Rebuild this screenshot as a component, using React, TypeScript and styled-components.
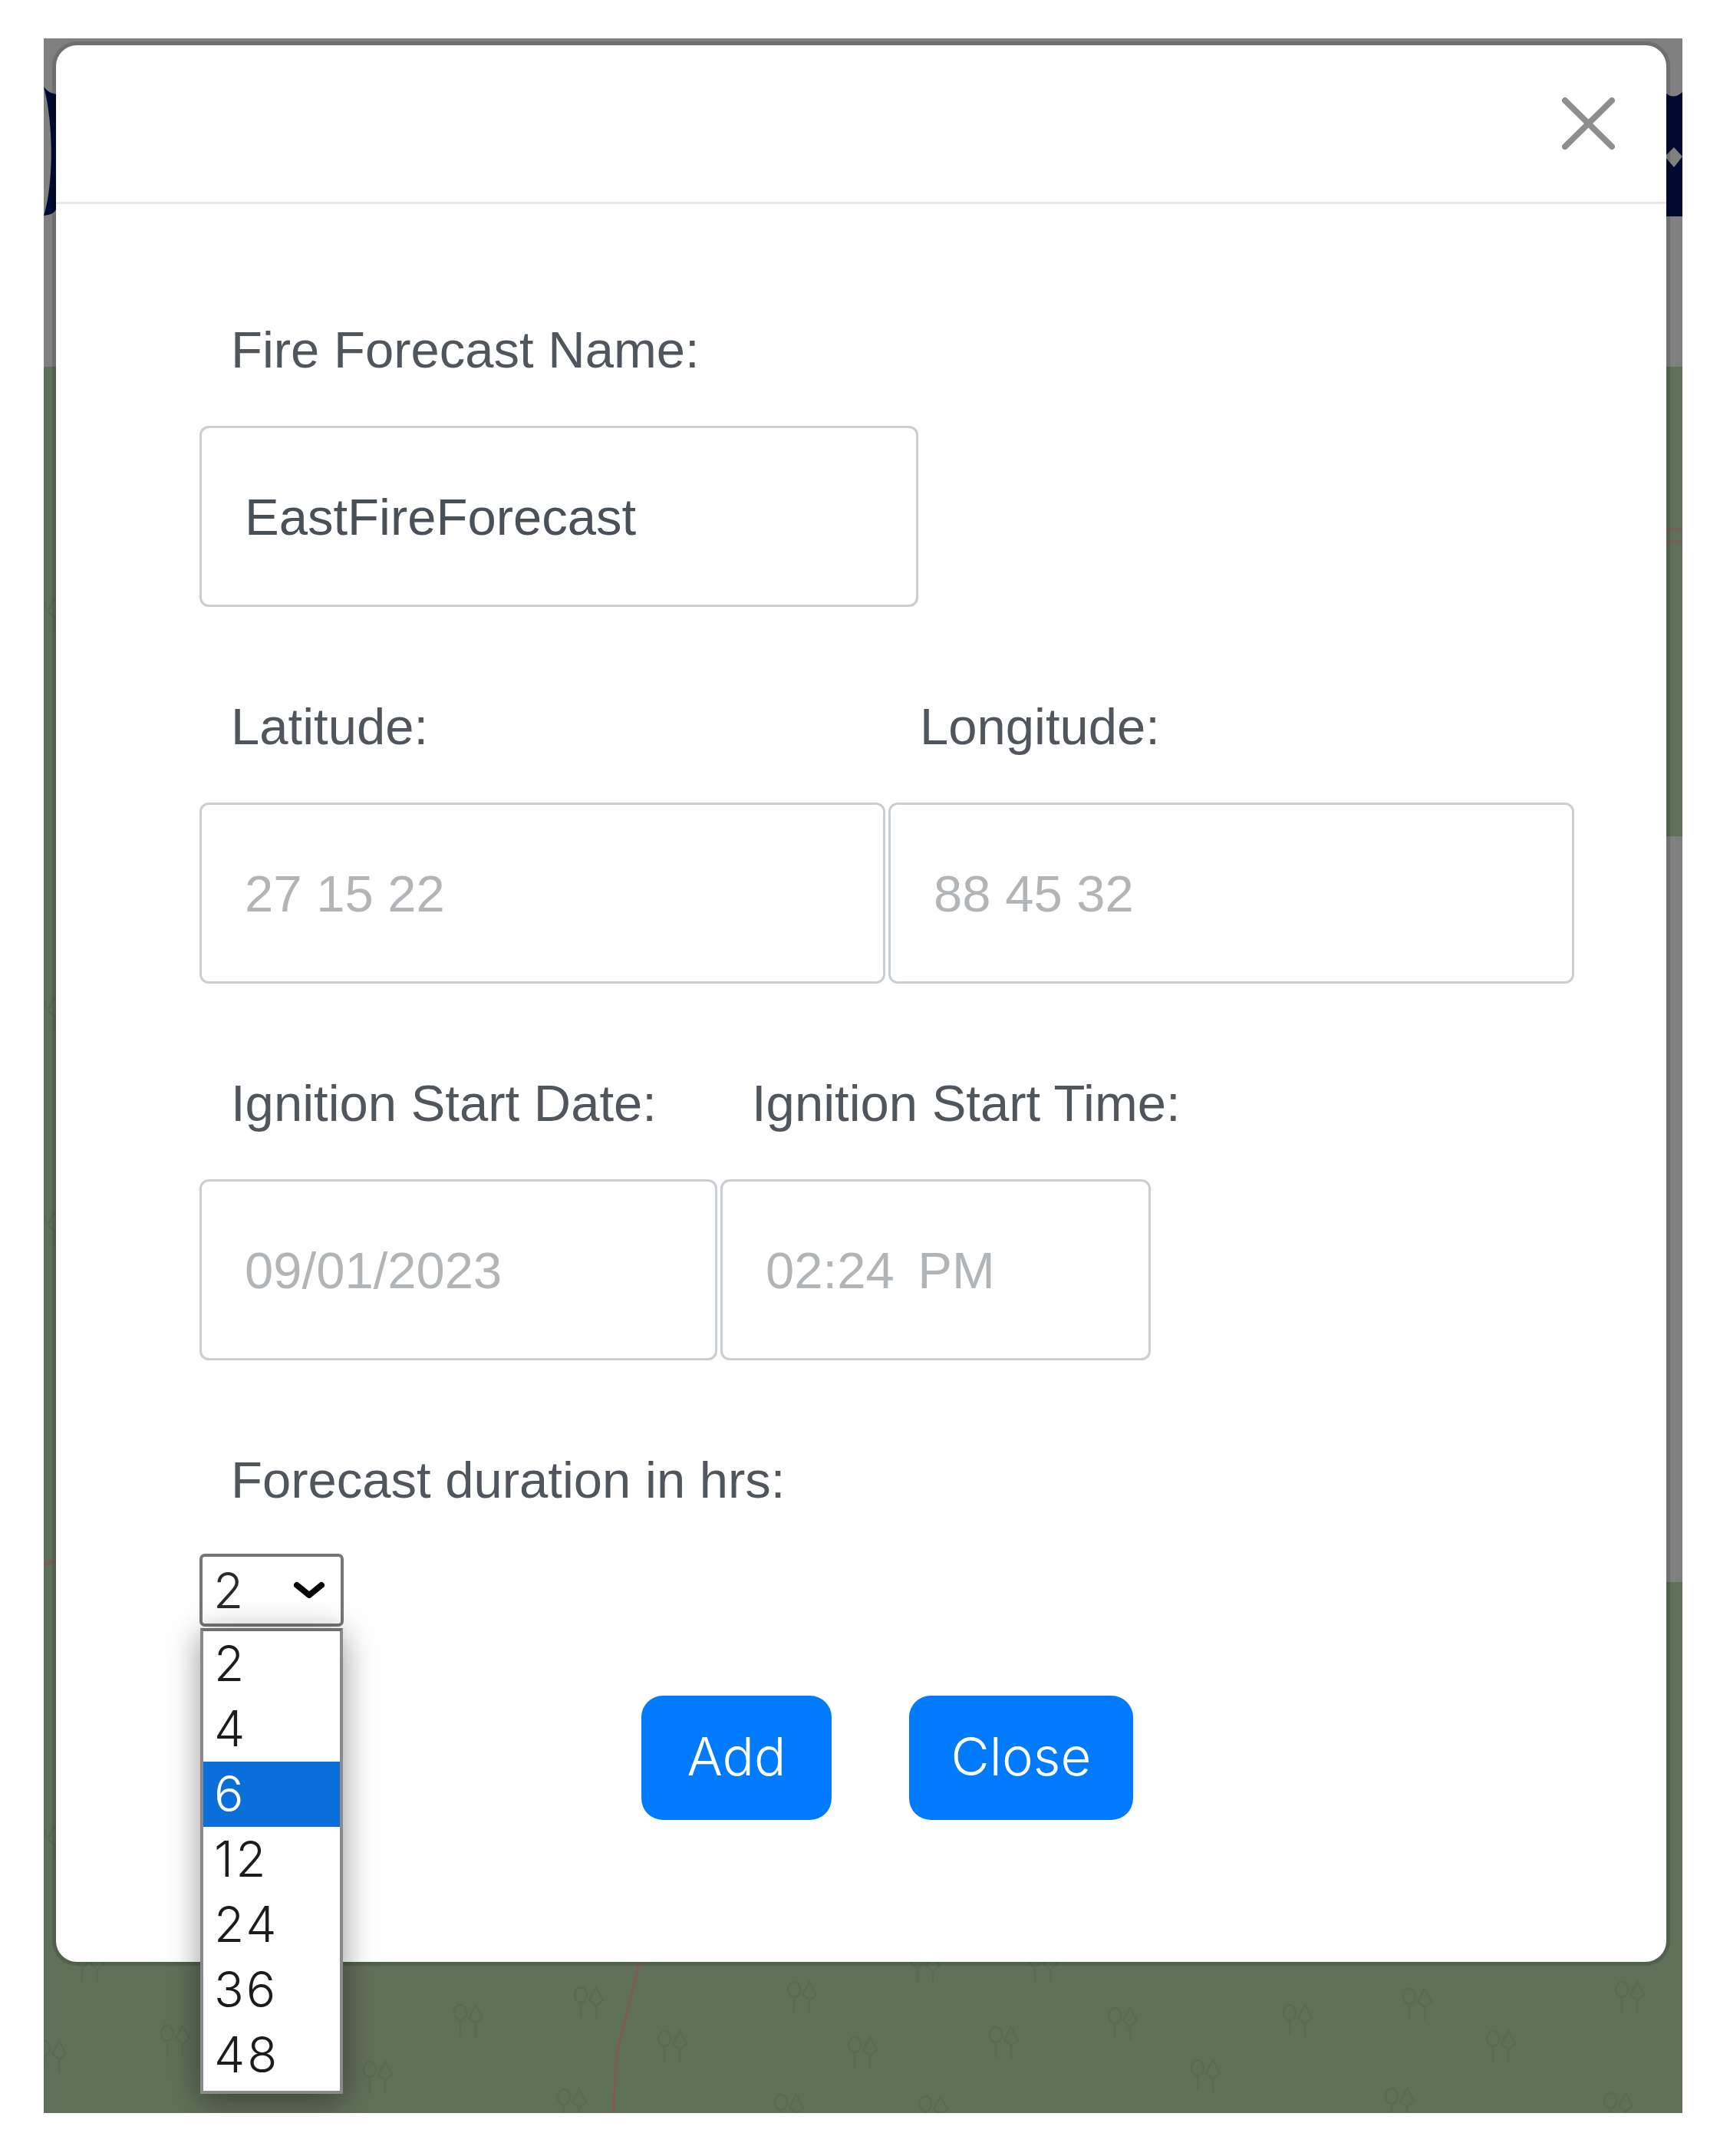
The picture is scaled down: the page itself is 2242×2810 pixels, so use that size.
import React from "react";
import styled, { createGlobalStyle } from "styled-components";

const Global = createGlobalStyle`
  html, body { margin: 0; padding: 0; background: #fff; }
  * { box-sizing: border-box; }
`;

const Page = styled.div`
  width: 2242px;
  height: 2810px;
  padding: 50px 49px 56px 57px;
  font-family: "Liberation Sans", Arial, sans-serif;
`;

const Backdrop = styled.div`
  position: relative;
  width: 2136px;
  height: 2704px;
  padding: 4px 16px 0 11px;
  overflow: hidden;
`;

const MapArt = styled.svg`
  position: absolute;
  inset: 0;
  width: 100%;
  height: 100%;
`;

const Modal = styled.div`
  position: relative;
  display: flex;
  flex-direction: column;
  width: 2109px;
  height: 2508px;
  background: #fff;
  background-clip: padding-box;
  border: 5px solid rgba(0, 0, 0, 0.13);
  border-radius: 32px;
`;

const Header = styled.div`
  display: flex;
  justify-content: flex-end;
  align-items: flex-start;
  flex: none;
  height: 207px;
  padding: 68px 67px 0 0;
  border-bottom: 3px solid #e6eaee;
`;

const CloseIcon = styled.button`
  display: block;
  width: 69px;
  height: 68px;
  padding: 0;
  border: 0;
  background: none;
  color: #8e8e8e;
`;

const Body = styled.div`
  display: flex;
  flex-direction: column;
  padding: 137px 0 0 187px;
`;

const Row = styled.div`
  display: flex;
  margin-bottom: 103px;
`;

const Field = styled.div`
  display: flex;
  flex-direction: column;
  margin-right: 4px;
`;

const Label = styled.label`
  display: block;
  height: 105px;
  margin-bottom: 47px;
  padding-left: 41px;
  font-size: 67px;
  line-height: 105px;
  color: #50565c;
  white-space: nowrap;
`;

const Input = styled.input<{ $w: number }>`
  display: block;
  width: ${(p) => p.$w}px;
  height: 236px;
  padding: 0 0 0 56px;
  border: 3px solid #c9ced3;
  border-radius: 12px;
  background: #fff;
  font-family: "Liberation Sans", Arial, sans-serif;
  font-size: 67px;
  color: #495057;
  outline: none;
  &::placeholder {
    color: #b2b5b8;
    opacity: 1;
  }
`;

const TimeInput = styled(Input)`
  &::placeholder {
    word-spacing: 12px;
  }
`;

const SelectLabel = styled(Label)`
  margin-bottom: 44px;
`;

const SelectWrap = styled.div`
  position: relative;
  width: 188px;
`;

const SelectBox = styled.div`
  display: flex;
  align-items: center;
  justify-content: space-between;
  width: 188px;
  height: 95px;
  padding: 0 21px 0 14px;
  border: 4px solid #767676;
  border-radius: 7px;
  background: #fff;
  font-family: Inter, "Liberation Sans", sans-serif;
  font-size: 64px;
  font-weight: 300;
  color: #2b2b2b;
`;

const Chevron = styled.svg`
  display: block;
  width: 40px;
  height: 24px;
`;

const OptionList = styled.ul`
  position: absolute;
  z-index: 5;
  top: 97px;
  left: 1px;
  width: 186px;
  margin: 0;
  padding: 0 0 4px;
  list-style: none;
  background: #fff;
  border: 4px solid #8a8a8a;
  border-top-color: #6f6f6f;
  box-shadow: 0 8px 40px rgba(0, 0, 0, 0.42);
`;

const Option = styled.li<{ $active?: boolean }>`
  height: 85px;
  padding-left: 14px;
  font-family: Inter, "Liberation Sans", sans-serif;
  font-size: 64px;
  font-weight: 300;
  letter-spacing: 3px;
  line-height: 83px;
  color: ${(p) => (p.$active ? "#fff" : "#1c1c1c")};
  background: ${(p) => (p.$active ? "#0a6fd8" : "transparent")};
`;

const Actions = styled.div`
  display: flex;
  gap: 101px;
  margin: 90px 0 0 576px;
`;

const Action = styled.button<{ $w: number }>`
  width: ${(p) => p.$w}px;
  height: 162px;
  padding: 0 0 5px;
  border: 0;
  border-radius: 28px;
  background: #007bff;
  color: #fff;
  font-family: Inter, "Liberation Sans", sans-serif;
  font-size: 69px;
  font-weight: 300;
`;

const trees: [number, number][] = [
  [118, 2563], [68, 2680], [229, 2660], [493, 2707], [611, 2633], [768, 2610],
  [877, 2667], [746, 2743], [1046, 2603], [1029, 2750], [1125, 2675],
  [1207, 2565], [1360, 2563], [1309, 2662], [1464, 2637], [1692, 2633], [1848, 2612],
  [1572, 2705], [1825, 2742], [1957, 2667], [2125, 2603], [2110, 2748], [1217, 2752],
  [62, 800], [62, 1320], [62, 1600], [62, 2400],
];

const options = ["2", "4", "6", "12", "24", "36", "48"];

function Map() {
  return (
    <MapArt viewBox="57 50 2136 2704" preserveAspectRatio="none">
      <rect x="57" y="50" width="2136" height="428" fill="#808080" />
      <rect x="57" y="478" width="2136" height="2276" fill="#5f7059" />
      <rect x="2100" y="1090" width="93" height="972" fill="#808080" />
      <path d="M57 113 C66 125 74 120 74 125 L74 270 C72 280 62 280 57 281 C70 240 70 160 57 113 Z" fill="#000a30" />
      <path d="M2165 120 L2172 122 Q2182 130 2193 120 L2193 282 L2165 282 Z" fill="#000a30" />
      <path d="M2182 192 L2193 204 L2182 218 L2170 204 Z" fill="#808080" />
      <g fill="none" stroke="#7d5c58" strokeWidth="3.5">
        <path d="M834 2550 C824 2610 806 2650 803 2690 C801 2720 800 2740 799 2754" />
        <path d="M57 2040 L74 2033" />
        <path d="M2172 692 Q2182 686 2193 692" />
        <path d="M2172 708 Q2182 702 2193 708" />
      </g>
      <g fill="none" stroke="#596a53" strokeWidth="2.5">
        {trees.map(([x, y]) => (
          <g key={`${x}-${y}`} transform={`translate(${x - 20} ${y - 20})`}>
            <ellipse cx="9" cy="10" rx="8" ry="10" />
            <path d="M9 20 V40" />
            <path d="M29 0 L38 17 L29 24 L20 17 Z" />
            <path d="M29 24 V42" />
          </g>
        ))}
      </g>
    </MapArt>
  );
}

export default function App() {
  return (
    <Page>
      <Global />
      <Backdrop>
        <Map />
        <Modal>
          <Header>
            <CloseIcon aria-label="Close">
              <svg viewBox="0 0 69 68" width="69" height="68" fill="none" stroke="currentColor" strokeWidth="8" strokeLinecap="round">
                <path d="M4 4 L65 64 M65 4 L4 64" />
              </svg>
            </CloseIcon>
          </Header>
          <Body>
            <Row>
              <Field>
                <Label>Fire Forecast Name:</Label>
                <Input $w={937} readOnly defaultValue="EastFireForecast" />
              </Field>
            </Row>
            <Row>
              <Field>
                <Label>Latitude:</Label>
                <Input $w={894} readOnly placeholder="27 15 22" />
              </Field>
              <Field>
                <Label>Longitude:</Label>
                <Input $w={894} readOnly placeholder="88 45 32" />
              </Field>
            </Row>
            <Row>
              <Field>
                <Label>Ignition Start Date:</Label>
                <Input $w={675} readOnly placeholder="09/01/2023" />
              </Field>
              <Field>
                <Label>Ignition Start Time:</Label>
                <TimeInput $w={561} readOnly placeholder="02:24 PM" />
              </Field>
            </Row>
            <SelectLabel>Forecast duration in hrs:</SelectLabel>
            <SelectWrap>
              <SelectBox>
                2
                <Chevron viewBox="0 0 40 24" fill="none" stroke="#000" strokeWidth="8" strokeLinecap="round" strokeLinejoin="round">
                  <path d="M4 5 L20 18 L36 5" />
                </Chevron>
              </SelectBox>
              <OptionList>
                {options.map((o) => (
                  <Option key={o} $active={o === "6"}>{o}</Option>
                ))}
              </OptionList>
            </SelectWrap>
            <Actions>
              <Action $w={248}>Add</Action>
              <Action $w={292}>Close</Action>
            </Actions>
          </Body>
        </Modal>
      </Backdrop>
    </Page>
  );
}
